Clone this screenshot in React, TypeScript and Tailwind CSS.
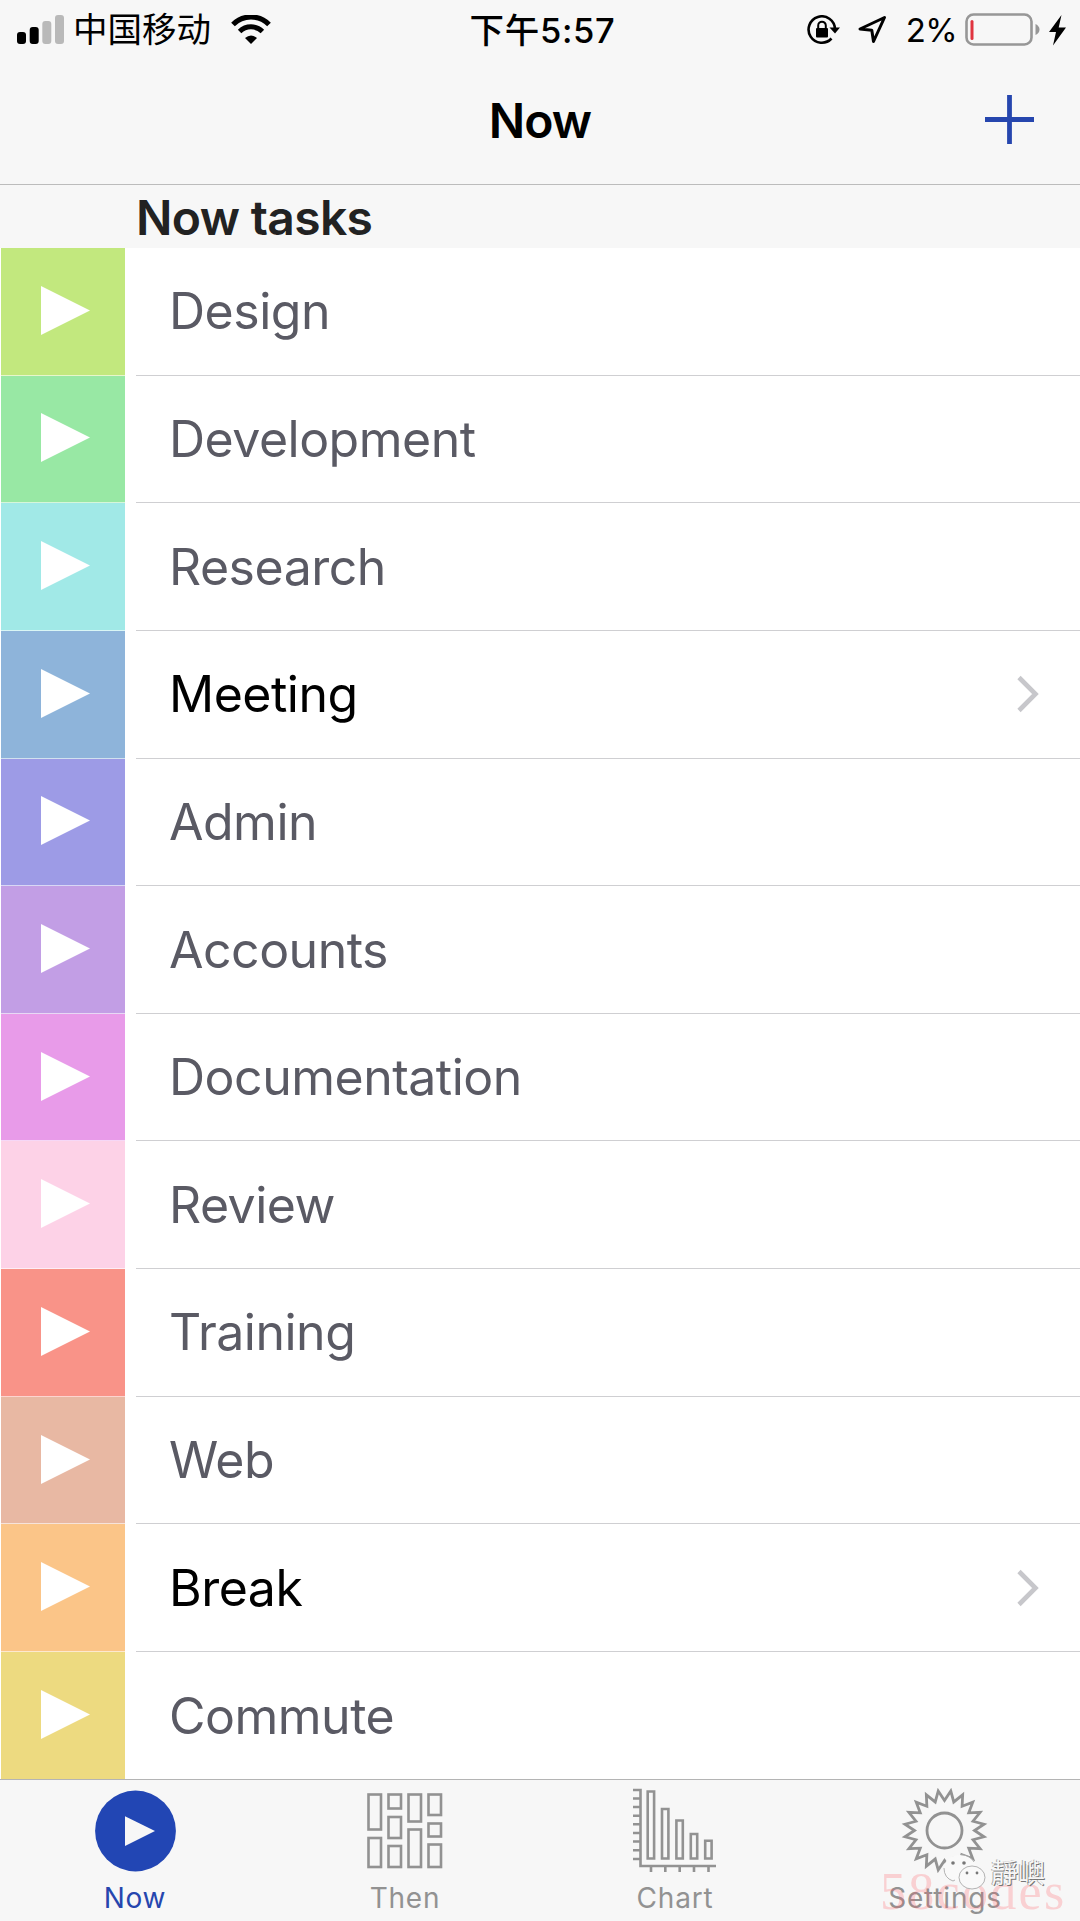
import { clsx } from "clsx";

type Task = { name: string; color: string; active?: boolean };

const TASKS: Task[] = [
  { name: "Design", color: "bg-[#c2e87e]" },
  { name: "Development", color: "bg-[#98e8a4]" },
  { name: "Research", color: "bg-[#a1e9e7]" },
  { name: "Meeting", color: "bg-[#8eb4da]", active: true },
  { name: "Admin", color: "bg-[#9d9be6]" },
  { name: "Accounts", color: "bg-[#c29ee5]" },
  { name: "Documentation", color: "bg-[#e89be9]" },
  { name: "Review", color: "bg-[#fdd2e7]" },
  { name: "Training", color: "bg-[#f99388]" },
  { name: "Web", color: "bg-[#e8b8a3]" },
  { name: "Break", color: "bg-[#fbc588]", active: true },
  { name: "Commute", color: "bg-[#edda80]" },
];

export default function App() {
  return (
    <div className="flex h-[1921px] w-[1080px] flex-col overflow-hidden bg-white font-['Inter','Noto_Sans_CJK_SC',sans-serif]">
      <StatusBar />
      <NavBar />
      <h2 className="flex h-[63px] shrink-0 items-center bg-[#f7f7f7] pl-[136px] pt-0.5 text-[48px] font-semibold leading-none tracking-[-0.65px] text-[#222]">
        Now tasks
      </h2>
      <main className="flex h-[1531px] shrink-0 flex-col overflow-hidden">
        {TASKS.map((task) => (
          <TaskRow key={task.name} task={task} />
        ))}
      </main>
      <TabBar />
    </div>
  );
}

function StatusBar() {
  return (
    <div className="grid h-[60px] shrink-0 grid-cols-3 items-center bg-[#f7f7f7] text-[33px] leading-none text-black">
      <div className="flex items-center pl-[17px]">
        <svg className="h-[30px] w-[47px]" viewBox="0 0 47 30">
          <rect x="0" y="17" width="9" height="12" rx="3" />
          <rect x="12.7" y="12" width="9" height="17" rx="3" />
          <rect x="25.3" y="6" width="9" height="23" rx="3" fill="#b9b9b9" />
          <rect x="38" y="0" width="9" height="29" rx="3" fill="#b9b9b9" />
        </svg>
        <span className="ml-[9px] pt-px text-[34.5px]">中国移动</span>
        <svg className="ml-[20px] h-[30px] w-[40px]" viewBox="0 0 40 30" fill="none" stroke="#000">
          <path d="M2 9.5 C12 -0.5 28 -0.5 38 9.5" strokeWidth="5.2" />
          <path d="M8.6 16.5 C15 10.3 25 10.3 31.4 16.5" strokeWidth="5" />
          <path d="M20 29 L14 23 Q20 18 26 23 Z" fill="#000" stroke="none" />
        </svg>
      </div>
      <div className="flex justify-center pl-[5px] pt-0.5 text-[34.5px] font-medium tracking-[0.7px]">
        下午5:57
      </div>
      <div className="flex items-center justify-end pr-[14px]">
        <svg className="h-[30px] w-[34px]" viewBox="0 0 34 30" fill="none" stroke="#000" strokeWidth="2.6">
          <path d="M28 14 A13.2 13.2 0 1 0 24.5 23.5" />
          <path d="M22.5 12.5 H33 L28 18.5 Z" fill="#000" stroke="none" />
          <rect x="9" y="13" width="12" height="9.5" rx="1" fill="#000" stroke="none" />
          <path d="M11.2 14 V10.5 a3.8 3.8 0 0 1 7.6 0 V14" strokeWidth="2" />
        </svg>
        <svg className="ml-[17px] h-[30px] w-[29px]" viewBox="0 0 29 30" fill="none" stroke="#000" strokeWidth="3" strokeLinejoin="round">
          <path d="M26.5 2.5 L15.5 26.5 L13.8 15.2 L2 14 Z" />
        </svg>
        <span className="ml-[19px] pt-px tracking-[-0.6px]">2%</span>
        <svg className="ml-[8px] h-[34px] w-[75px]" viewBox="0 0 75 34">
          <rect x="1.5" y="1.5" width="65" height="30" rx="7" fill="none" stroke="#979797" strokeWidth="2.6" />
          <rect x="5.5" y="7" width="3" height="20" rx="1.5" fill="#e0343f" />
          <path d="M70.5 11 Q74.5 13 74.5 16.5 Q74.5 20 70.5 22 Z" fill="#979797" />
        </svg>
        <svg className="ml-[9px] h-[32px] w-[17px]" viewBox="0 0 17 32">
          <path d="M12.5 1 L0 18 H7 L4 31.5 L17 13.5 H9.7 Z" />
        </svg>
      </div>
    </div>
  );
}

function NavBar() {
  return (
    <header className="grid h-[125px] shrink-0 grid-cols-3 items-center border-b border-[#bcbcbc] bg-[#f7f7f7] pb-1">
      <div />
      <h1 className="pt-0.5 text-center text-[48px] font-semibold leading-none tracking-[-0.9px] text-black">Now</h1>
      <svg className="mb-0.5 mr-[46px] h-[49px] w-[49px] justify-self-end" viewBox="0 0 49 49" stroke="#2646ae" strokeWidth="4.8">
        <path d="M0 24.5 H49 M24.5 0 V49" />
      </svg>
    </header>
  );
}

function TaskRow({ task }: { task: Task }) {
  return (
    <div className="group flex h-[127.65px] shrink-0">
      <div className={clsx("ml-px mr-[11px] flex w-[124px] items-center border-b border-white/60 pb-0.5 pl-10 group-last:border-b-0", task.color)}>
        <svg className="h-[49px] w-[49px]" viewBox="0 0 50 50" fill="#fff">
          <path d="M0 0 L50 25 L0 50 Z" />
        </svg>
      </div>
      <div className="flex flex-1 items-center justify-between border-b border-[#cfcfd2] pl-[33px] pr-[41px] group-last:border-b-0">
        <span
          className={clsx(
            "text-[50px] leading-none tracking-[-0.5px]",
            task.active ? "text-black" : "text-[#5a5a64]",
          )}
        >
          {task.name}
        </span>
        {task.active && (
          <svg className="h-[38px] w-[22px]" viewBox="0 0 22 38" fill="none" stroke="#c7c7cb" strokeWidth="4.6">
            <path d="M2 2.5 L18.5 19 L2 35.5" />
          </svg>
        )}
      </div>
    </div>
  );
}

function TabBar() {
  return (
    <nav className="relative grid h-[142px] shrink-0 grid-cols-4 border-t border-[#b4b4b4] bg-[#f7f7f7] text-[#929292]">
      <Tab label="Now" className="text-[#2646ae]">
        <svg className="h-[90px] w-[90px] overflow-visible" viewBox="0 0 90 90">
          <circle cx="45.5" cy="51" r="40.4" fill="#2246b4" />
          <path d="M35 36.3 L65 51 L35 66 Z" fill="#f7f7f7" />
        </svg>
      </Tab>
      <Tab label="Then">
        <ThenIcon />
      </Tab>
      <Tab label="Chart">
        <ChartIcon />
      </Tab>
      <Tab label="Settings">
        <SettingsIcon />
      </Tab>
      <Watermark />
    </nav>
  );
}

function Tab({ label, className, children }: { label: string; className?: string; children: React.ReactNode }) {
  return (
    <div className={clsx("flex flex-col items-center", className)}>
      {children}
      <span className="mt-[11px] text-[28px] leading-[34px] tracking-[0.8px]">{label}</span>
    </div>
  );
}

// x, y, height of every block; all blocks share one width
const BLOCKS = [
  [8.5, 14.5, 35], [8.5, 58, 29],
  [28.5, 14.5, 14], [28.5, 37, 21], [28.5, 66, 21],
  [48.5, 14.5, 27], [48.5, 49.5, 37.5],
  [68.5, 14.5, 20.5], [68.5, 43.5, 13], [68.5, 64.5, 22.5],
];

function ThenIcon() {
  return (
    <svg className="h-[90px] w-[90px]" viewBox="0 0 90 90" fill="none" stroke="currentColor" strokeWidth="2.6">
      {BLOCKS.map(([x, y, h]) => (
        <rect key={`${x}-${y}`} x={x} y={y} width="12.5" height={h} />
      ))}
    </svg>
  );
}

function ChartIcon() {
  return (
    <svg className="h-[90px] w-[90px] overflow-visible" viewBox="0 0 90 90" fill="none" stroke="currentColor" strokeWidth="2.6">
      <path d="M3 10 H10.5 V86 H86" />
      <path d="M3 18.5 H10 M3 27 H10 M3 35.7 H10 M3 44.3 H10 M3 53 H10 M3 61.5 H10 M3 70.2 H10 M3 79 H10" />
      <path d="M21 86 V92 M35.3 86 V92 M49.7 86 V92 M64 86 V92 M78.5 86 V92" />
      <path d="M17.7 11.5 h6.4 v67 h-6.4 z M32 29 h6.4 v49.5 h-6.4 z M46.4 40.5 h6.4 v38 h-6.4 z M60.8 54 h6.4 v24.5 h-6.4 z M75.2 60.7 h6.4 v17.8 h-6.4 z" />
    </svg>
  );
}

function SettingsIcon() {
  // 20 teeth, with a valley at twelve o'clock
  const points = Array.from({ length: 40 }, (_, i) => {
    const angle = ((i + 1) * Math.PI) / 20 - Math.PI / 2;
    const r = i % 2 ? 30 : 40;
    return `${44.5 + r * Math.cos(angle)},${50.5 + r * Math.sin(angle)}`;
  });
  return (
    <svg className="h-[90px] w-[90px] overflow-visible" viewBox="0 0 90 90" fill="none" stroke="currentColor" strokeWidth="2.8">
      <polygon points={points.join(" ")} />
      <circle cx="44.5" cy="50.5" r="17.5" />
    </svg>
  );
}

function Watermark() {
  return (
    <>
      <span className="absolute left-[880px] top-[87px] font-['Liberation_Serif',serif] text-[52px] leading-[50px] tracking-[2.3px] text-[#ff5a64]/25">
        58codes
      </span>
      <svg className="absolute left-[943px] top-[74px] h-[38px] w-[44px]" viewBox="0 0 44 38" fill="#f9f9f9" stroke="#aaa" strokeWidth="0.9">
        <ellipse cx="17" cy="14" rx="16" ry="13" stroke="none" />
        <path d="M1 14 Q1 24 10 27 L12 26 M17 0.5 Q27 1 31 8" fill="none" />
        <ellipse cx="29" cy="23.5" rx="13" ry="11.5" />
        <g fill="#777" stroke="none">
          <circle cx="10" cy="9" r="1.8" />
          <circle cx="21" cy="9" r="1.8" />
          <circle cx="24" cy="19" r="1.4" />
          <circle cx="34" cy="19" r="1.4" />
        </g>
      </svg>
      <span className="absolute left-[991px] top-[75px] font-['Noto_Sans_CJK_TC',sans-serif] text-[27px] leading-[34px] text-[#f7f7f7] [text-shadow:1px_1px_0_#777,-1px_0_0_#aaa]">
        靜嶼
      </span>
    </>
  );
}
